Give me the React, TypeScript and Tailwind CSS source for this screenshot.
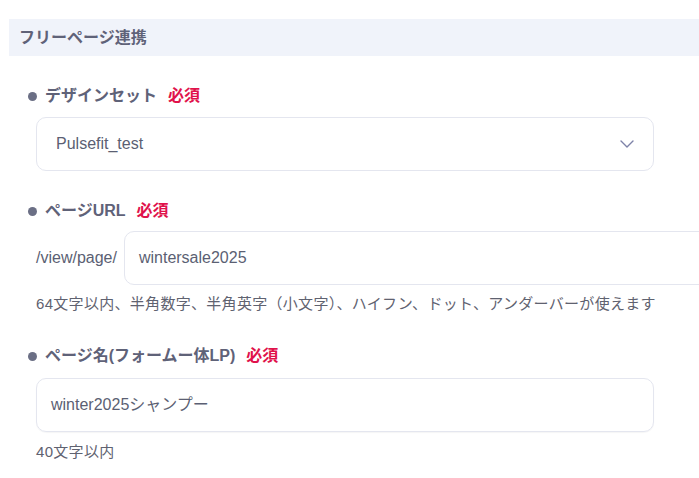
function FieldLabel({ children }: { children: React.ReactNode }) {
  return (
    <div className="flex items-center h-5 pl-[28px]">
      <span className="w-[9px] h-[9px] rounded-full bg-[#6b6f85] mr-[8px]" />
      <span className="text-[16px] font-bold text-[#5f6278]">{children}</span>
      <span className="ml-[11px] text-[16px] font-bold text-[#e0124b]">必須</span>
    </div>
  );
}

export default function App() {
  return (
    <div
      className="w-[699px] h-[478px] overflow-hidden bg-white pt-[19px]"
      style={{ fontFamily: '"Liberation Sans", "Noto Sans CJK JP", sans-serif' }}
    >
      {/* セクション見出し */}
      <div className="ml-[9px] h-[37px] bg-[#f0f3fa] flex items-center pl-[10px]">
        <h2 className="text-[16px] font-bold text-[#5f6278]">フリーページ連携</h2>
      </div>

      {/* デザインセット */}
      <div className="mt-[30px]">
        <FieldLabel>デザインセット</FieldLabel>
      </div>
      <div className="mt-[11px] ml-[36px] w-[618px] h-[54px] rounded-[10px] border border-[#e4e6ef] flex items-center justify-between pl-[19px] pr-[19px]">
        <span className="text-[16px] text-[#5b5f73]">Pulsefit_test</span>
        <svg width="14" height="8" viewBox="0 0 14 8" fill="none" className="text-[#7d82a8]">
          <path d="M1 1l6 6 6-6" stroke="currentColor" strokeWidth="1.4" strokeLinecap="round" strokeLinejoin="round" />
        </svg>
      </div>

      {/* ページURL */}
      <div className="mt-[30px]">
        <FieldLabel>ページURL</FieldLabel>
      </div>
      <div className="mt-[10px] ml-[36px] flex items-center gap-[7px]">
        <span className="text-[16px] text-[#5b5f73]">/view/page/</span>
        <div className="shrink-0 w-[640px] h-[54px] rounded-[10px] border border-[#e4e6ef] flex items-center pl-[14px]">
          <span className="text-[16px] text-[#5b5f73]">wintersale2025</span>
        </div>
      </div>
      <p className="mt-[9px] ml-[36px] h-5 leading-5 text-[15px] tracking-[0.3px] text-[#5f6270]">
        64文字以内、半角数字、半角英字（小文字）、ハイフン、ドット、アンダーバーが使えます
      </p>

      {/* ページ名 */}
      <div className="mt-[32px]">
        <FieldLabel>ページ名(フォームー体LP)</FieldLabel>
      </div>
      <div className="mt-[12px] ml-[36px] w-[618px] h-[54px] rounded-[10px] border border-[#e4e6ef] shadow-[0_1px_1px_rgba(0,0,0,0.04)] flex items-center pl-[14px]">
        <span className="text-[16px] text-[#5b5f73]">winter2025シャンプー</span>
      </div>
      <p className="mt-[10px] ml-[36px] h-5 leading-5 text-[15px] tracking-[0.3px] text-[#5f6270]">40文字以内</p>
    </div>
  );
}
